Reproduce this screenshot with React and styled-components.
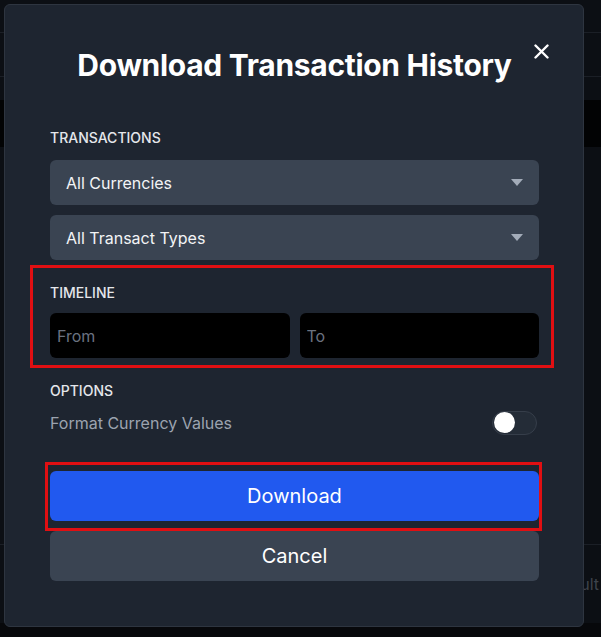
import React, { useState } from "react";
import styled, { createGlobalStyle } from "styled-components";

const GlobalStyle = createGlobalStyle`
  html, body {
    margin: 0;
    padding: 0;
    background: #0a0c10;
    font-family: Inter, "Noto Sans", "Liberation Sans", sans-serif;
    overflow: hidden;
  }
  * { box-sizing: border-box; }
`;

// the page behind the dialog, mostly hidden
const Page = styled.div`
  width: 601px;
  height: 637px;
  position: relative;
  background: #0c0f14;
  display: flex;
  flex-direction: column;
`;

const PageRow = styled.div`
  height: ${(p) => p.h}px;
  border-bottom: 1px solid ${(p) => (p.line ? "#1b1f26" : "transparent")};
  background: ${(p) => p.bg || "transparent"};
  display: flex;
  align-items: center;
  justify-content: flex-end;
  color: #3e434b;
  font-size: 16px;
  padding-right: 2px;
`;

const Modal = styled.div`
  position: absolute;
  left: 4px;
  top: 4px;
  width: 580px;
  height: 623px;
  background: #1e2530;
  border: 1px solid #2e3540;
  border-radius: 6px;
  padding: 42px 44px 0 45px;
  display: flex;
  flex-direction: column;
`;

const Title = styled.h2`
  margin: 0;
  font-size: 30px;
  line-height: 36px;
  font-weight: 700;
  color: #ffffff;
  text-align: center;
  letter-spacing: -0.3px;
`;

const Close = styled.button`
  position: absolute;
  top: 37px;
  right: 33px;
  width: 18px;
  height: 18px;
  padding: 0;
  border: 0;
  background: none;
  cursor: pointer;
  display: flex;
  align-items: center;
  justify-content: center;
`;

const Section = styled.div`
  position: relative;
  display: flex;
  flex-direction: column;
  gap: 10px;
  margin-top: ${(p) => p.mt}px;

  ${(p) =>
    p.marked &&
    `&::after {
      content: "";
      position: absolute;
      top: -18px;
      left: -20px;
      right: -15px;
      bottom: -10px;
      border: 3px solid #e10f12;
      pointer-events: none;
    }`}
`;

const Label = styled.div`
  font-size: 14px;
  line-height: 20px;
  font-weight: 500;
  color: #e5e7eb;
  text-transform: uppercase;
  margin-bottom: ${(p) => p.mb || 0}px;
`;

const Select = styled.div`
  height: 45px;
  border-radius: 6px;
  background: #3a4452;
  display: flex;
  align-items: center;
  justify-content: space-between;
  padding: 0 16px 0 16px;
  font-size: 16px;
  color: #f3f4f6;
`;

const Caret = styled.span`
  width: 0;
  height: 0;
  border-left: 6.5px solid transparent;
  border-right: 6.5px solid transparent;
  border-top: 7px solid #a3acb9;
`;

const Pair = styled.div`
  display: grid;
  grid-template-columns: 1fr 1fr;
  gap: 10px;
`;

const Input = styled.input`
  width: 100%;
  min-width: 0;
  height: 45px;
  border: 0;
  border-radius: 6px;
  background: #000;
  color: #e5e7eb;
  font-family: inherit;
  font-size: 16px;
  padding: 0 7px;
  outline: none;
  &::placeholder { color: #6b7280; }
`;

const OptionRow = styled.div`
  display: flex;
  align-items: center;
  justify-content: space-between;
  height: 23px;
`;

const OptionText = styled.span`
  font-size: 16px;
  color: #9ca3af;
`;

const Toggle = styled.button`
  width: 45px;
  height: 24px;
  border-radius: 12px;
  border: 1px solid #363e4a;
  background: #242c37;
  padding: 0 1px;
  margin-right: 2px;
  display: flex;
  align-items: center;
  justify-content: ${(p) => (p.on ? "flex-end" : "flex-start")};
  cursor: pointer;
`;

const Knob = styled.span`
  width: 21px;
  height: 21px;
  border-radius: 50%;
  background: #fff;
`;

const Actions = styled.div`
  display: flex;
  flex-direction: column;
  gap: 10px;
  margin-top: 37px;
`;

const Wrap = styled.div`
  position: relative;
  &::after {
    content: "";
    position: absolute;
    top: -9px;
    left: -5px;
    right: -3px;
    bottom: -10px;
    border: 3px solid #e10f12;
    pointer-events: none;
  }
`;

const Button = styled.button`
  width: 100%;
  height: 50px;
  border: 0;
  border-radius: 6px;
  font-family: inherit;
  font-size: 20px;
  color: #fff;
  background: ${(p) => (p.primary ? "#2159ef" : "#3a4452")};
  cursor: pointer;
`;

export default function App() {
  const [formatValues, setFormatValues] = useState(false);

  return (
    <>
      <GlobalStyle />
      <Page>
        <PageRow h={33} line />
        <PageRow h={44} line />
        <PageRow h={23} />
        <PageRow h={47} bg="#020304" />
        <PageRow h={398} line />
        <PageRow h={78}>ult</PageRow>
        <PageRow h={14} bg="#07080b" />

        <Modal>
          <Title>Download Transaction History</Title>
          <Close aria-label="Close">
            <svg width="15" height="15" viewBox="0 0 15 15">
              <path d="M1.5 1.5 L13.5 13.5 M13.5 1.5 L1.5 13.5" stroke="#fff" strokeWidth="2.4" strokeLinecap="round" />
            </svg>
          </Close>

          <Section mt={45}>
            <Label mb={2}>Transactions</Label>
            <Select>
              All Currencies
              <Caret />
            </Select>
            <Select>
              All Transact Types
              <Caret />
            </Select>
          </Section>

          <Section mt={23} marked>
            <Label>Timeline</Label>
            <Pair>
              <Input placeholder="From" />
              <Input placeholder="To" />
            </Pair>
          </Section>

          <Section mt={23}>
            <Label>Options</Label>
            <OptionRow>
              <OptionText>Format Currency Values</OptionText>
              <Toggle on={formatValues} onClick={() => setFormatValues(!formatValues)}>
                <Knob />
              </Toggle>
            </OptionRow>
          </Section>

          <Actions>
            <Wrap>
              <Button primary>Download</Button>
            </Wrap>
            <Button>Cancel</Button>
          </Actions>
        </Modal>
      </Page>
    </>
  );
}
